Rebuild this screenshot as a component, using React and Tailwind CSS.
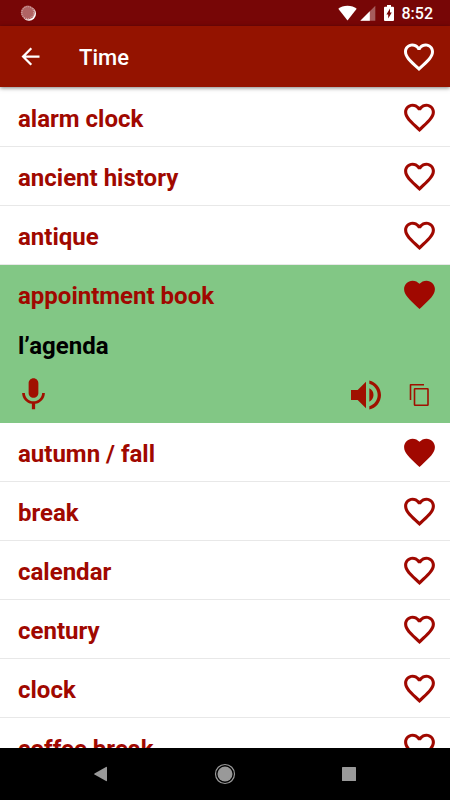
import { useState } from "react";
import {
  MdArrowBack,
  MdFavorite,
  MdFavoriteBorder,
  MdVolumeUp,
} from "react-icons/md";

const WORDS = [
  { term: "alarm clock" },
  { term: "ancient history" },
  { term: "antique" },
  { term: "appointment book", translation: "l’agenda", favorite: true },
  { term: "autumn / fall", favorite: true },
  { term: "break" },
  { term: "calendar" },
  { term: "century" },
  { term: "clock" },
  { term: "coffee break" },
];

const StatusBar = () => (
  <div className="flex h-[26px] shrink-0 items-center bg-[#770606] pr-[17px] pl-5 text-white">
    <svg viewBox="0 0 16 16" className="size-4">
      <circle cx="9" cy="8.8" r="7" fill="#fff" />
      <circle cx="7.8" cy="7.6" r="7" fill="#b06464" />
      <circle
        cx="7.8"
        cy="7.6"
        r="6"
        fill="none"
        stroke="#d0a0a0"
        strokeWidth="1.2"
        strokeDasharray="1 1"
      />
    </svg>
    <svg viewBox="0 0 19 16" className="ml-auto h-4 w-[19px]" fill="#fff">
      <path d="M9.5 15.5 0.3 3.8C2.6 1.9 5.8.7 9.5.7s6.9 1.2 9.2 3.1z" />
    </svg>
    <svg viewBox="0 0 16 16" className="ml-[3px] size-4">
      <path d="M15.3.7v15H.3z" fill="#fff" fillOpacity=".35" />
      <path d="M9.8 6.2v9.5H.3z" fill="#fff" />
    </svg>
    <svg viewBox="0 0 10 16" className="ml-2 h-4 w-[10px]">
      <path
        d="M3 0h4v1.8h2q1 0 1 1v12.2q0 1-1 1H1q-1 0-1-1V2.8q0-1 1-1h2z"
        fill="#fff"
      />
      <path d="M6 3.6v4h1.800L4.200 13.600V9.600H2.400z" fill="#770606" />
    </svg>
    <span className="ml-2 pt-0.5 text-base leading-6 font-medium">8:52</span>
  </div>
);

const FavoriteButton = ({ label, active, onClick }) => (
  <button
    type="button"
    aria-label={label}
    aria-pressed={active}
    onClick={onClick}
    className="shrink-0"
  >
    {active ? (
      <MdFavorite className="size-[37px]" />
    ) : (
      <MdFavoriteBorder className="size-[37px]" />
    )}
  </button>
);

const WordDetail = ({ translation }) => (
  <div className="text-[#a01000]">
    <p className="pt-0.5 pl-[18px] text-2xl leading-10 font-bold text-black">
      {translation}
    </p>
    <div className="flex h-[57px] items-center pr-[18px] pl-[14px]">
      <button type="button" aria-label="Record">
        <svg viewBox="0 0 24 24" className="size-[39px]" fill="currentColor">
          <path d="M12 14c1.660 0 2.990-1.340 2.990-3L15 5c0-1.660-1.340-3-3-3S9 3.340 9 5v6c0 1.660 1.340 3 3 3zm5.300-3c0 3-2.540 5.100-5.300 5.100S6.700 14 6.700 11H5c0 3.410 2.720 6.230 6 6.720V21h2v-3.280c3.280-.480 6-3.300 6-6.720h-1.700z" />
        </svg>
      </button>
      <button type="button" aria-label="Listen" className="ml-auto">
        <MdVolumeUp className="size-10" />
      </button>
      <button type="button" aria-label="Copy" className="ml-[22px]">
        <svg
          viewBox="0 0 24 24"
          className="size-6"
          fill="none"
          stroke="currentColor"
          strokeWidth="1.6"
          strokeLinejoin="round"
        >
          <path d="M2.500 17V1.700H16" />
          <rect x="6.500" y="5.700" width="13.500" height="16.500" rx=".5" />
        </svg>
      </button>
    </div>
  </div>
);

export default function App() {
  const [open, setOpen] = useState("appointment book");
  const [favorites, setFavorites] = useState(
    WORDS.filter((word) => word.favorite).map((word) => word.term)
  );

  const toggleFavorite = (term) => {
    setFavorites((prev) =>
      prev.includes(term) ? prev.filter((t) => t !== term) : [...prev, term]
    );
  };

  return (
    <div className={styles.main}>
      <StatusBar />

      <header className="relative z-10 flex h-[61px] shrink-0 items-center bg-[#941300] pr-[13px] pl-[17px] text-white shadow-[0_1px_4px_rgba(0,0,0,0.5)]">
        <button type="button" aria-label="Back">
          <MdArrowBack className="size-[27px]" />
        </button>
        <h1 className="ml-[35px] pt-0.5 text-[22px] leading-8 font-medium">
          Time
        </h1>
        <button type="button" aria-label="Favorites" className="ml-auto">
          <MdFavoriteBorder className="size-9" />
        </button>
      </header>

      <ul className="min-h-0 flex-1 overflow-hidden pt-px">
        {WORDS.map(({ term, translation }) => {
          const isOpen = open === term && translation;
          return (
            <li
              key={term}
              className={
                isOpen ? "bg-[#82c785]" : "border-b border-[#e8e8e8] bg-white"
              }
            >
              <div
                className={`flex items-center pr-3 pl-[18px] text-[#a00800] ${
                  isOpen ? "h-[59px]" : "h-[58px]"
                }`}
              >
                <button
                  type="button"
                  aria-expanded={Boolean(isOpen)}
                  onClick={() => setOpen(isOpen ? null : term)}
                  className="flex-1 pt-[3px] text-left text-2xl leading-8 font-bold"
                >
                  {term}
                </button>
                <FavoriteButton
                  label={`Favorite ${term}`}
                  active={favorites.includes(term)}
                  onClick={() => toggleFavorite(term)}
                />
              </div>
              {isOpen && <WordDetail translation={translation} />}
            </li>
          );
        })}
      </ul>

      <nav className="flex h-[52px] shrink-0 items-center justify-center gap-[100px] bg-black text-[#999]">
        <button type="button" aria-label="System back">
          <svg viewBox="0 0 24 24" className="size-6" fill="currentColor">
            <path d="M18 5.500v13q0 1-1 .5L5.500 12.600q-.8-.6 0-1.200L17 5q1-.5 1 .5z" />
          </svg>
        </button>
        <button type="button" aria-label="Home">
          <svg viewBox="0 0 24 24" className="size-6">
            <circle cx="12" cy="12" r="7.500" fill="currentColor" />
            <circle
              cx="12"
              cy="12"
              r="9.500"
              fill="none"
              stroke="currentColor"
              strokeWidth="1.200"
            />
          </svg>
        </button>
        <button type="button" aria-label="Recent apps">
          <svg viewBox="0 0 24 24" className="size-6" fill="currentColor">
            <rect x="5" y="5" width="14" height="14" rx=".5" />
          </svg>
        </button>
      </nav>
    </div>
  );
}

const styles = {
  main: "flex h-dvh w-full flex-col overflow-hidden bg-white font-['Roboto',sans-serif]",
};
